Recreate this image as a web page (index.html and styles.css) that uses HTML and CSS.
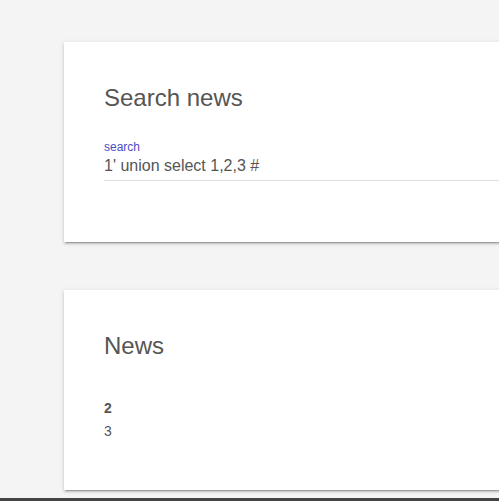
FILE: index.html
```html
<!DOCTYPE html>
<html>
<head>
<meta charset="utf-8">
<link rel="stylesheet" href="styles.css">
</head>
<body>
<div class="page">
  <section class="card card-search">
    <h2 class="card-title">Search news</h2>
    <div class="field">
      <label class="field-label">search</label>
      <div class="field-input">1' union select 1,2,3 #</div>
    </div>
  </section>
  <section class="card card-news">
    <h2 class="card-title">News</h2>
    <ul class="news-list">
      <li class="news-item bold">2</li>
      <li class="news-item">3</li>
    </ul>
  </section>
</div>
<footer class="footer"></footer>
</body>
</html>
```
FILE: styles.css
```css
html, body {
  margin: 0;
  padding: 0;
}
body {
  background: #f4f4f4;
  font-family: "Liberation Sans", Arial, sans-serif;
  color: #555;
  overflow: hidden;
  width: 499px;
  height: 501px;
  position: relative;
}
.page {
  padding-top: 42px;
  padding-left: 64px;
  overflow: hidden;
}
.card {
  background: #fff;
  width: 600px;
  box-sizing: border-box;
  padding: 40px 40px 0 40px;
  box-shadow: 0 2px 2px rgba(0,0,0,0.14), 0 1px 5px rgba(0,0,0,0.12), 0 3px 1px -2px rgba(0,0,0,0.2);
}
.card-search {
  height: 200px;
}
.card-news {
  height: 200px;
  margin-top: 48px;
  margin-bottom: 8px;
}
.card-title {
  margin: 0;
  font-size: 24px;
  line-height: 32px;
  font-weight: normal;
  color: #555;
}
.field {
  margin-top: 25px;
  display: flex;
  flex-direction: column;
}
.field-label {
  font-size: 12px;
  line-height: 16px;
  color: #4b4bc8;
}
.field-input {
  font-size: 16px;
  line-height: 20px;
  margin-top: 1px;
  padding-bottom: 4px;
  border-bottom: 1px solid #ddd;
  color: #555;
}
.news-list {
  list-style: none;
  margin: 35px 0 0 0;
  padding: 0;
}
.news-item {
  font-size: 14px;
  line-height: 23px;
  color: #555;
}
.news-item.bold {
  font-weight: bold;
}
.footer {
  position: absolute;
  left: 0;
  right: 0;
  top: 498px;
  height: 10px;
  background: #444;
}
```
